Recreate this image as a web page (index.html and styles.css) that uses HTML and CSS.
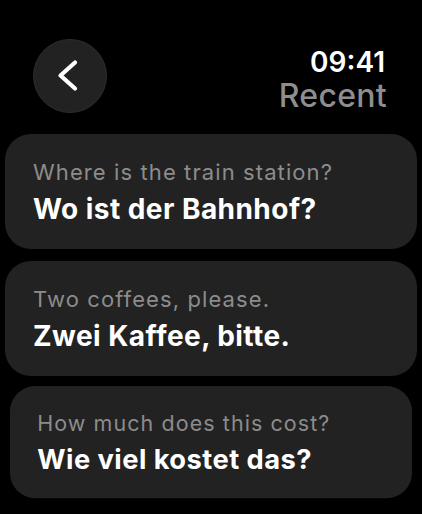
FILE: index.html
```html
<!DOCTYPE html>
<html lang="en">
<head>
<meta charset="utf-8">
<title>Recent</title>
<link rel="stylesheet" href="styles.css">
</head>
<body>
<div class="screen">
  <header class="header">
    <button class="back" aria-label="Back">
      <svg width="74" height="74" viewBox="0 0 74 74" aria-hidden="true">
        <polyline points="42,23.5 27.5,36.5 42,49.5" fill="none" stroke="#fff" stroke-width="4.2" stroke-linecap="round" stroke-linejoin="round"/>
      </svg>
    </button>
    <div class="titles">
      <div class="time">09:41</div>
      <div class="title">Recent</div>
    </div>
  </header>
  <main class="list">
    <div class="card">
      <div class="source">Where is the train station?</div>
      <div class="target">Wo ist der Bahnhof?</div>
    </div>
    <div class="card">
      <div class="source">Two coffees, please.</div>
      <div class="target">Zwei Kaffee, bitte.</div>
    </div>
    <div class="card card-far">
      <div class="source">How much does this cost?</div>
      <div class="target">Wie viel kostet das?</div>
    </div>
  </main>
</div>
</body>
</html>
```
FILE: styles.css
```css
html, body {
  margin: 0;
  padding: 0;
  background: #000;
}
body {
  font-family: Inter, "Noto Sans", "Liberation Sans", sans-serif;
  color: #fff;
  width: 422px;
  height: 514px;
  overflow: hidden;
}
.screen {
  padding: 39px 5px 0 5px;
}
.header {
  display: flex;
  justify-content: space-between;
  align-items: flex-start;
  padding: 0 30px 0 28px;
}
.back {
  width: 74px;
  height: 74px;
  border-radius: 50%;
  background: #222222;
  border: 1px solid #2e2e2e;
  padding: 0;
  margin: 0;
  display: flex;
  align-items: center;
  justify-content: center;
  box-sizing: border-box;
}
.back svg {
  display: block;
  flex: none;
}
.titles {
  padding-top: 7px;
  display: flex;
  flex-direction: column;
  align-items: flex-end;
}
.time {
  font-size: 28px;
  line-height: 32px;
  font-weight: 600;
  color: #fff;
  padding-right: 2px;
}
.title {
  font-size: 32px;
  line-height: 36px;
  font-weight: 500;
  color: #8e8e8e;
  letter-spacing: 0.3px;
}
.list {
  margin-top: 20px;
  display: flex;
  flex-direction: column;
  gap: 12px;
}
.card {
  background: #222222;
  border-radius: 26px;
  padding: 25px 28px 24px 28px;
}
.card-far {
  transform: scale(0.976);
  transform-origin: center top;
  margin-top: -2px;
}
.source {
  font-size: 22px;
  line-height: 26px;
  color: #8c8c8c;
  font-weight: 400;
  letter-spacing: 1.1px;
}
.target {
  margin-top: 8px;
  font-size: 28px;
  line-height: 32px;
  font-weight: 700;
  color: #fff;
  letter-spacing: 0.45px;
}
```
